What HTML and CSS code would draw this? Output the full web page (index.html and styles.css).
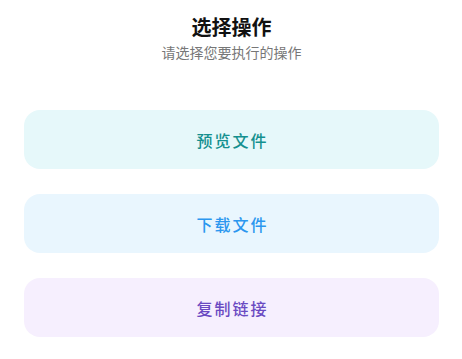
FILE: index.html
```html
<!DOCTYPE html>
<html lang="zh-CN">
<head>
    <meta charset="UTF-8">
    <meta name="viewport" content="width=device-width, initial-scale=1.0">
    <title>选择操作</title>
    <link rel="stylesheet" href="styles.css">
</head>
<body>
    <div class="sheet">
        <div class="header">
            <h1>选择操作</h1>
            <p>请选择您要执行的操作</p>
        </div>
        <div class="actions">
            <button class="action preview">预览文件</button>
            <button class="action download">下载文件</button>
            <button class="action copy">复制链接</button>
        </div>
    </div>
</body>
</html>
```

FILE: styles.css
```css
body {
    margin: 0;
    font-family: 'Noto Sans CJK SC', 'Noto Sans', sans-serif;
    background-color: #fff;
    color: #111;
}

.sheet {
    padding: 13px 23px 0 24px;
}

.header {
    text-align: center;
}

.header h1 {
    margin: 0;
    font-size: 20px;
    line-height: 28px;
    font-weight: 600;
    color: #111;
}

.header p {
    margin: 3px 0 0;
    font-size: 14px;
    line-height: 16px;
    color: #777;
}

.actions {
    display: flex;
    flex-direction: column;
    gap: 25px;
    margin-top: 50px;
}

.action {
    height: 59px;
    border: none;
    border-radius: 16px;
    font-family: inherit;
    font-size: 16px;
    font-weight: 500;
    letter-spacing: 2px;
    padding: 0 0 0 2px;
    cursor: pointer;
}

.preview {
    background-color: #e6f8fa;
    color: #14908f;
}

.download {
    background-color: #e9f6fe;
    color: #2b97ef;
}

.copy {
    background-color: #f6effe;
    color: #6a4ac2;
}
```
